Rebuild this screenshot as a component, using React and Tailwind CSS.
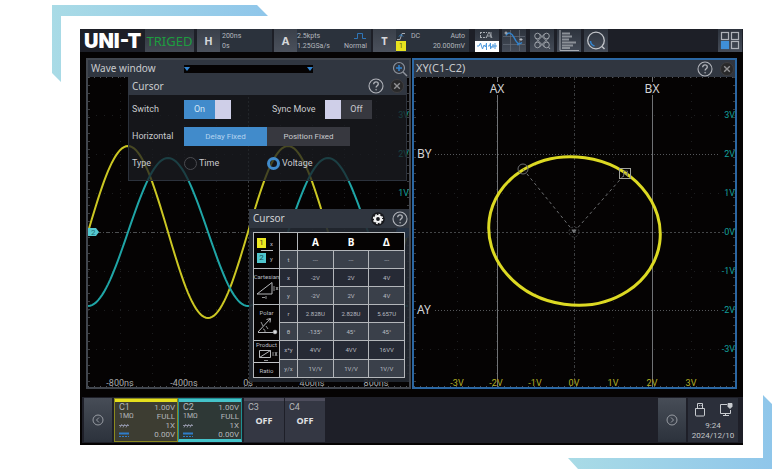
import { useState } from 'react'

const CHANNELS = [
  { name: 'C1', scale: '1.00V', box: 'border-[#8c8a1e] bg-[#3d3d32]', bar: 'bg-[#e6e01e]', foot: '' },
  { name: 'C2', scale: '1.00V', box: 'border-[#1f8f92] bg-[#2e3836]', bar: 'bg-[#45c3ca]', foot: 'border-b-[3px] border-b-[#45c3ca]' },
]

const ROWS = [
  { key: 't', values: ['---', '---', '---'] },
  { key: 'x', head: 'cartesian', values: ['-2V', '2V', '4V'] },
  { key: 'y', values: ['-2V', '2V', '4V'] },
  { key: 'r', head: 'polar', values: ['2.828U', '2.828U', '5.657U'] },
  { key: 'θ', values: ['-135°', '45°', '45°'] },
  { key: 'x*y', head: 'product', values: ['4VV', '4VV', '16VV'] },
  { key: 'y/x', values: ['1V/V', '1V/V', '1V/V'] },
]

function sine(amp, phase) {
  let d = ''
  for (let x = 0; x <= 320; x += 2) {
    const y = 155 - amp * Math.sin((x / 160) * Math.PI * 2 + phase)
    d += `${x === 0 ? 'M' : 'L'}${x} ${y.toFixed(2)}`
  }
  return d
}

function HelpIcon() {
  return (
    <svg viewBox="0 0 16 16" className="size-4" fill="none" stroke="#b0b3b9">
      <circle cx="8" cy="8" r="7" strokeWidth="1.1" />
      <path d="M5.7 6.3c0-1.5 1-2.4 2.3-2.4s2.3.9 2.3 2.1c0 1.7-2.2 1.8-2.2 3.5" strokeWidth="1.3" />
      <circle cx="8.1" cy="11.7" r=".5" fill="#b0b3b9" strokeWidth=".5" />
    </svg>
  )
}

function CloseIcon() {
  return (
    <svg viewBox="0 0 14 14" className="size-3.5">
      <circle cx="7" cy="7" r="6.5" fill="#29292a" stroke="#3e3e40" />
      <path d="M4.2 4.2l5.6 5.6M9.800 4.200l-5.600 5.600" stroke="#929294" strokeWidth="1.4" />
    </svg>
  )
}

function GearIcon() {
  return (
    <svg viewBox="0 0 14 14" className="size-3.5">
      <circle cx="7" cy="7" r="6.8" fill="#17181c" />
      <circle cx="7" cy="7" r="3" fill="none" stroke="#f2f2f2" strokeWidth="2.2" />
      <circle cx="7" cy="7" r="4.5" fill="none" stroke="#f2f2f2" strokeWidth="1.4" strokeDasharray="1.8 1.73" />
    </svg>
  )
}

function IconButton({ label, className = '', children }) {
  return (
    <button aria-label={label} className={`flex shrink-0 items-center justify-center ${className}`}>
      {children}
    </button>
  )
}

function Knob({ children }) {
  return (
    <button className="w-[23px] shrink-0 bg-linear-to-b from-[#3a404a] to-[#4b515c] font-['Noto_Sans',sans-serif] text-[11px] font-bold text-[#d5d7da]">
      {children}
    </button>
  )
}

function TopBar() {
  const tool = 'h-[23px] w-6 bg-linear-to-b from-[#2d333d] to-[#454c58]'
  return (
    <header className="flex h-[23px] overflow-hidden bg-[#1d1f27] text-[7px] leading-[10px] text-[#b3b7bd]">
      <div className="flex w-[65px] shrink-0 items-center pl-1 font-['Inter',sans-serif] text-[20px] font-black text-white">UNI-T</div>
      <div className="flex w-[49px] shrink-0 items-center justify-center bg-linear-to-b from-[#2f353e] to-[#434953] font-['Noto_Sans',sans-serif] text-[13px] text-[#1d9c3f]">TRIGED</div>
      <div className="ml-[3px] flex shrink-0">
        <Knob>H</Knob>
        <div className="w-[52px] bg-[#2b323c] pt-0.5 pl-0.5">
          <p>200ns</p>
          <p>0s</p>
        </div>
      </div>
      <div className="ml-0.5 flex shrink-0">
        <Knob>A</Knob>
        <div className="flex w-[74px] justify-between bg-[#2b323c] pt-0.5 pr-1">
          <div>
            <p>2.5kpts</p>
            <p>1.25GSa/s</p>
          </div>
          <div className="flex flex-col items-end">
            <svg viewBox="0 0 13 10" className="h-2.5 w-[13px]" fill="none" stroke="#2f76b8">
              <path d="M0 7.5h3.5V2.5h5v5H12" />
            </svg>
            <p>Normal</p>
          </div>
        </div>
      </div>
      <div className="ml-0.5 flex shrink-0">
        <Knob>T</Knob>
        <div className="flex w-[73px] bg-[#2b323c] pt-0.5 pr-1">
          <div className="w-[15px]">
            <svg viewBox="0 0 10 10" className="size-2.5" fill="none">
              <path d="M1 8.5h3l2-6h3" stroke="#b3b7bd" strokeWidth=".9" />
              <path d="M3 5.5l2-2 2 2" stroke="#2f86d0" />
            </svg>
            <p className="w-2.5 bg-[#e8e31f] text-center text-[#5b5a18]">1</p>
          </div>
          <p>DC</p>
          <div className="ml-auto text-right">
            <p>Auto</p>
            <p>20.000mV</p>
          </div>
        </div>
      </div>
      <div className="ml-1.5 flex shrink-0 gap-[3px]">
        <IconButton label="Zone select" className={tool}>
          <svg viewBox="0 0 24 23" className="h-[23px] w-6" fill="none">
            <path d="M5 3.5h7M5 8.5h7M5.5 3v6" stroke="#a7abb2" strokeDasharray="2 1" />
            <path d="M11 9l3-6 3 6M12 7h4M16 3v6" stroke="#a7abb2" strokeWidth=".9" />
            <path d="M0 12h24v11H0z" fill="#fff" />
            <path d="M2 17h2l1.500-3 2 6 1.500-4 1.500 2 1-4v7M13 17h1.500l1-3v6l1.500-3M18 15v4M20 14v6M22 17h-5" stroke="#4b98dd" />
          </svg>
        </IconButton>
        <IconButton label="Cursor" className={tool}>
          <svg viewBox="0 0 24 23" className="h-[23px] w-6" fill="none">
            <path d="M8.500 1v21M17.500 1v21M1 7.500h22M1 15.500h22" stroke="#666d78" strokeWidth=".7" />
            <path d="M4 6.500C6 2.500 9.500 3.500 12 8.500s4.500 8 8 5" stroke="#3284cf" strokeWidth="1.500" />
            <path d="M2.500 4h3M4 2.500v3M17.500 10.500h3M19 9v3" stroke="#b9bcc2" />
            <circle cx="16" cy="15.500" r="1" fill="#3284cf" />
          </svg>
        </IconButton>
      </div>
      <div className="ml-1 flex shrink-0 gap-[3px]">
        <IconButton label="Math" className={tool}>
          <svg viewBox="0 0 24 23" className="h-[23px] w-6" fill="none" stroke="#a3a7ae" strokeWidth=".9">
            <circle cx="7.500" cy="7" r="2.800" />
            <circle cx="16.500" cy="7" r="2.800" />
            <circle cx="7.500" cy="16" r="2.800" />
            <circle cx="16.500" cy="16" r="2.800" />
            <path d="M9.500 5l9 9M14.500 5l-9 9M9.500 18l9-9M14.500 18l-9-9M18.500 18l1.500 2" />
          </svg>
        </IconButton>
        <IconButton label="Histogram" className={tool}>
          <svg viewBox="0 0 24 23" className="h-[23px] w-6" fill="none">
            <path d="M3 1v20.500h19" stroke="#a7abb2" />
            <path d="M5 4.500h8M5 7.500h10M5 10.500h7M5 13.500h14M5 16.500h11M5 19h8" stroke="#8b9097" strokeWidth="2" />
          </svg>
        </IconButton>
        <IconButton label="Search" className={tool}>
          <svg viewBox="0 0 24 23" className="h-[23px] w-6" fill="none">
            <circle cx="12" cy="11.500" r="8.300" stroke="#c2c5ca" strokeWidth="1.300" />
            <path d="M18 17.500l2.500 2.500" stroke="#c2c5ca" strokeWidth="1.400" />
            <path d="M6.500 12a5.500 5.500 0 0 0 4 5" stroke="#3284cf" strokeWidth="1.500" />
          </svg>
        </IconButton>
      </div>
      <IconButton label="Layout" className={`ml-auto mr-px ${tool}`}>
        <svg viewBox="0 0 24 23" className="h-[23px] w-6" fill="none" stroke="#aeb2b9" strokeWidth="1.200">
          <rect x="3.500" y="3.500" width="7" height="7" />
          <rect x="13.500" y="3.500" width="7" height="7" />
          <rect x="3.500" y="12.500" width="7" height="7" fill="#3f8fd8" stroke="#3f8fd8" />
          <rect x="13.500" y="12.500" width="7" height="7" />
        </svg>
      </IconButton>
    </header>
  )
}

function WavePlot() {
  return (
    <svg viewBox="0 0 321 310" className="block h-auto w-full font-['Roboto',sans-serif] text-[9px]" fill="none">
      <g stroke="#1d1e20" strokeDasharray="1 7">
        {[32, 64, 96, 128, 192, 224, 256, 288].map((x) => (
          <path key={x} d={`M${x}.5 0V310`} />
        ))}
        {[38, 77, 116, 194, 233, 272].map((y) => (
          <path key={y} d={`M0 ${y}.500H321`} />
        ))}
      </g>
      <path d="M160.500 0V310" stroke="#3a3c3e" strokeDasharray="2 2" />
      <path d="M0 155.500H321" stroke="#4c4e50" strokeDasharray="4 2 1 2" />
      <path d="M1 0V310M320 0V310" stroke="#3c3e42" strokeDasharray="1 7" strokeWidth="2" />
      <path d="M0 .5H321M0 309.500H321" stroke="#505256" strokeDasharray="1 5" />
      <path d={sine(86, 0)} stroke="#cbc723" strokeWidth="2" />
      <path d={sine(74, -Math.PI / 2)} stroke="#1fa5a6" strokeWidth="2" />
      <circle cx="315" cy="155" r="7" fill="#2f7fd0" />
      <path d="M0 151h8l3 4-3 4H0z" fill="#55c8cf" />
      <text x="3" y="158" fill="#1d6f76" className="text-[8px]">2</text>
      <g fill="#13a09c" textAnchor="end">
        <text x="321" y="41">3V</text>
        <text x="321" y="80">2V</text>
        <text x="321" y="119">1V</text>
      </g>
      <g fill="#a9abae" textAnchor="middle">
        <text x="32" y="309">-800ns</text>
        <text x="96" y="309">-400ns</text>
        <text x="160" y="309">0s</text>
        <text x="224" y="309">400ns</text>
        <text x="288" y="309">800ns</text>
      </g>
    </svg>
  )
}

function XYPlot() {
  return (
    <svg viewBox="0 0 321 310" className="block h-auto w-full font-['Roboto',sans-serif] text-[9px]" fill="none">
      <g stroke="#1d1e20" strokeDasharray="1 7">
        {[43, 82, 121, 199, 238, 277].map((x) => (
          <path key={x} d={`M${x}.500 0V310`} />
        ))}
        {[38, 116, 194, 272].map((y) => (
          <path key={y} d={`M0 ${y}.500H321`} />
        ))}
      </g>
      <path d="M160.500 0V310" stroke="#3c3e40" strokeDasharray="3 2 1 2" />
      <path d="M0 155.500H310" stroke="#434547" strokeDasharray="2 2" />
      <path d="M21 77.500H306M21 233.500H306" stroke="#55575a" strokeDasharray="1 2" />
      <path d="M1 0V310M320 0V310" stroke="#3c3e42" strokeDasharray="1 7" strokeWidth="2" />
      <path d="M0 .5H321M0 309.500H321" stroke="#505256" strokeDasharray="1 5" />
      <path d="M83.500 0V5M83.500 18V310M238.500 0V5M238.500 18V310" stroke="#707275" />
      <ellipse cx="160.500" cy="154" rx="86" ry="74" transform="rotate(8 160.500 154)" stroke="#dcd923" strokeWidth="3" />
      <g stroke="#6c6e70">
        <path d="M160 155L109 92M160 155L211 97" strokeDasharray="3 3" />
        <circle cx="160" cy="155" r="5" strokeDasharray="2 2" stroke="#3e4042" />
        <circle cx="109" cy="92" r="5" />
        <rect x="205.500" y="91.500" width="11" height="10" stroke="#a0a29a" />
        <path d="M209.500 94h4M209.500 97h4M209.500 94v6M213.500 94v6" strokeWidth=".8" />
        <path d="M158 153l2 3 2-3z" fill="#7c7e80" />
      </g>
      <g fill="#d2d3d5" className="font-['Noto_Sans',sans-serif] text-[12px]">
        <text x="83" y="16" textAnchor="middle">AX</text>
        <text x="238" y="16" textAnchor="middle">BX</text>
        <text x="3" y="81">BY</text>
        <text x="3" y="237">AY</text>
      </g>
      <g fill="#13a09c" textAnchor="end">
        {[3, 2, 1, 0, -1, -2, -3].map((v, i) => (
          <text key={v} x="321" y={41 + i * 39}>{v}V</text>
        ))}
      </g>
      <g fill="#b3b027" textAnchor="middle">
        {[-3, -2, -1, 0, 1, 2, 3].map((v, i) => (
          <text key={v} x={43 + i * 39} y="309">{v}V</text>
        ))}
      </g>
    </svg>
  )
}

function Switch({ label, on, onChange }) {
  return (
    <button
      role="switch"
      aria-label={label}
      aria-checked={on}
      onClick={() => onChange(!on)}
      className={`flex h-[19px] w-[47px] shrink-0 items-stretch text-[9px] ${on ? 'bg-[#418bcb] text-[#d3e4f4]' : 'flex-row-reverse bg-[#37383f] text-[#c9cacd]'}`}
    >
      <span className="flex flex-1 items-center justify-center">{on ? 'On' : 'Off'}</span>
      <span className="w-4 bg-[#cfcfe8]" />
    </button>
  )
}

function CursorDialog() {
  const [on, setOn] = useState(true)
  const [sync, setSync] = useState(false)
  const [mode, setMode] = useState('Delay Fixed')
  const [type, setType] = useState('Voltage')
  return (
    <section className="absolute top-0 right-0.5 left-10 text-[9px] text-[#c9cbce]">
      <div className="flex h-[18px] items-center gap-1.5 bg-[#303640] pr-[3px] pl-1">
        <h3 className="mr-auto font-['Noto_Sans',sans-serif] text-[10px]">Cursor</h3>
        <IconButton label="Help"><HelpIcon /></IconButton>
        <IconButton label="Close"><CloseIcon /></IconButton>
      </div>
      <div className="flex flex-col gap-2 border border-t-0 border-[#2c323c] bg-[#1b1d23]/75 pt-[5px] pr-1 pb-[7px] pl-[3px]">
        <div className="flex h-[19px] items-center">
          <span className="w-[52px] shrink-0">Switch</span>
          <Switch label="Switch" on={on} onChange={setOn} />
          <span className="ml-[41px] w-[53px] shrink-0">Sync Move</span>
          <Switch label="Sync Move" on={sync} onChange={setSync} />
        </div>
        <div className="flex h-[19px] items-center">
          <span className="w-[52px] shrink-0">Horizontal</span>
          {['Delay Fixed', 'Position Fixed'].map((m) => (
            <button
              key={m}
              onClick={() => setMode(m)}
              className={`h-[19px] w-[83px] text-[8px] ${mode === m ? 'bg-[#418bcb] text-[#b5d3ef]' : 'bg-[#37383f] text-[#c9cacd]'}`}
            >
              {m}
            </button>
          ))}
        </div>
        <div className="flex h-[19px] items-center">
          <span className="w-[52px] shrink-0">Type</span>
          {['Time', 'Voltage'].map((t) => (
            <label key={t} className="flex w-[83px] items-center gap-0.5">
              <input
                type="radio"
                name="type"
                checked={type === t}
                onChange={() => setType(t)}
                className="size-[13px] appearance-none rounded-full border border-[#4a4b50] checked:border-[3px] checked:border-[#418bcb]"
              />
              {t}
            </label>
          ))}
        </div>
      </div>
    </section>
  )
}

function RowHead({ kind }) {
  if (kind === 'cartesian') {
    return (
      <div className="flex flex-col items-center">
        Cartesian
        <svg viewBox="0 0 24 20" className="h-5 w-6" fill="none" stroke="#b5b7ba">
          <path d="M2 14L17 2.500V14z" />
          <path d="M19 6v5M21 7l2 3M23 7l-2 3M7 17.500h3M11 16v3" strokeWidth=".8" />
        </svg>
      </div>
    )
  }
  if (kind === 'polar') {
    return (
      <div className="flex flex-col items-center">
        Polar
        <svg viewBox="0 0 24 20" className="h-5 w-6" fill="none" stroke="#b5b7ba">
          <path d="M3 16L15 3M11.500 3.500L15.500 2.500 15 6.500M3 16.500h15" />
          <path d="M6 6l2 4M8 13c2 0 2 2 2 3M11 10l2 3" strokeWidth=".8" />
          <circle cx="20" cy="16" r="1.800" fill="#d8d9db" />
        </svg>
      </div>
    )
  }
  return (
    <div className="flex h-9 flex-col">
      <div className="flex h-[22px] flex-col items-center border-b border-[#c2c4c7]">
        Product
        <svg viewBox="0 0 24 14" className="h-3.5 w-6" fill="none" stroke="#b5b7ba">
          <path d="M4.500 2.500h11v7h-11zM4.500 9.500l11-7" />
          <path d="M18 4v4M20 4l2 4M22 4l-2 4M9 12.500h4" strokeWidth=".8" />
        </svg>
      </div>
      <p className="flex flex-1 items-center justify-center">Ratio</p>
    </div>
  )
}

function CursorTable() {
  const line = 'border border-[#b3b6ba] p-0 text-center align-middle font-normal'
  return (
    <section className="absolute top-[132px] right-0 left-[161px] bg-[#242932]/90 pb-1">
      <div className="flex h-[19px] items-center gap-[7px] bg-[#303640] pr-px pl-1">
        <h3 className="mr-auto font-['Noto_Sans',sans-serif] text-[10px] text-[#d0d2d5]">Cursor</h3>
        <IconButton label="Settings"><GearIcon /></IconButton>
        <IconButton label="Help"><HelpIcon /></IconButton>
      </div>
      <div className="px-1 pt-1">
        <table className="w-full table-fixed border-collapse text-[6px] leading-[7px] text-[#b9bcc1]">
          <thead>
            <tr className="h-[18px] bg-[#050303] font-['Noto_Sans',sans-serif] text-[10px] text-white">
              <th rowSpan={2} className={`w-[26px] bg-[#050303] ${line}`}>
                <div className="mx-[3px] flex flex-col items-start gap-0.5 font-['Roboto',sans-serif] text-[6px] text-[#b9bcc1]">
                  <p className="flex items-center gap-1"><span className="w-[9px] bg-[#ece822] text-[8px] leading-[10px] text-[#4c4a10]">1</span>x</p>
                  <span className="ml-1 h-px w-3 bg-[#b9bcc1]" />
                  <p className="flex items-center gap-1"><span className="w-[9px] bg-[#50c6cd] text-[8px] leading-[10px] text-[#134b50]">2</span>y</p>
                </div>
              </th>
              <th className={`w-[18px] ${line}`} />
              {['A', 'B', 'Δ'].map((h) => (
                <th key={h} className="border-y border-[#b3b6ba] p-0 leading-4 font-bold last:border-r">{h}</th>
              ))}
            </tr>
            <tr className="h-[18px] bg-[#3a404a]">
              <th className={line}>{ROWS[0].key}</th>
              {ROWS[0].values.map((v, i) => <td key={i} className={line}>{v}</td>)}
            </tr>
          </thead>
          <tbody>
            {ROWS.slice(1).map((r) => (
              <tr key={r.key} className={`h-[18px] ${r.head ? 'bg-[#262a35]' : 'bg-[#3a404a]'}`}>
                {r.head && (
                  <th rowSpan={2} className={`overflow-hidden bg-[#050303] ${line}`}>
                    <RowHead kind={r.head} />
                  </th>
                )}
                <th className={line}>{r.key}</th>
                {r.values.map((v, i) => <td key={i} className={line}>{v}</td>)}
              </tr>
            ))}
          </tbody>
        </table>
      </div>
    </section>
  )
}

function BottomBar() {
  const arrow = 'w-7 bg-linear-to-b from-[#474d57] to-[#2c323c]'
  return (
    <footer className="mt-2 ml-0.5 flex h-[46px] gap-0.5 bg-[#1e1f28] py-[1px] pr-[5px] pl-0.5 text-[8px] leading-[9px] text-[#b4b7ba]">
      <IconButton label="Previous" className={arrow}>
        <svg viewBox="0 0 12 12" className="size-3" fill="none" stroke="#989ca3">
          <circle cx="6" cy="6" r="5" />
          <path d="M7 3.500L4.500 6 7 8.500" />
        </svg>
      </IconButton>
      <div className="flex">
        {CHANNELS.map((c) => (
          <section key={c.name} className={`w-16 border ${c.box} ${c.foot}`}>
            <div className={`h-[3px] ${c.bar}`} />
            <div className="grid grid-cols-[1fr_auto] pt-px pr-0.5 pl-1">
              <h4 className="text-[9px]">{c.name}</h4>
              <span className="text-right">{c.scale}</span>
              <span className="text-[7px]">1MΩ</span>
              <span className="text-right">FULL</span>
              <svg viewBox="0 0 10 9" className="h-[9px] w-2.5" fill="none" stroke="#8b8fa0">
                <path d="M0 4.500h10M1 6.500L3 3M4 6.500L6 3M7 6.500L9 3" />
              </svg>
              <span className="text-right">1X</span>
              <svg viewBox="0 0 10 9" className="h-[9px] w-2.5" fill="none" stroke="#2f7cc8">
                <path d="M0 3.500h10" strokeWidth="2" />
                <path d="M0 6.500h10" strokeDasharray="2 1" />
              </svg>
              <span className="text-right">0.00V</span>
            </div>
          </section>
        ))}
      </div>
      <div className="flex gap-px">
        {['C3', 'C4'].map((c) => (
          <section key={c} className="w-10 border-t-[3px] border-[#4d4d5c] bg-[#343743] pt-0.5">
            <h4 className="pl-1 text-[9px]">{c}</h4>
            <p className="pt-1 text-center font-['Noto_Sans',sans-serif] text-[9px] font-bold text-[#e0e1e3]">OFF</p>
          </section>
        ))}
      </div>
      <IconButton label="Next" className={`ml-auto ${arrow}`}>
        <svg viewBox="0 0 12 12" className="size-3" fill="none" stroke="#989ca3">
          <circle cx="6" cy="6" r="5" />
          <path d="M5 3.500L7.500 6 5 8.500" />
        </svg>
      </IconButton>
      <div className="flex w-[50px] flex-col items-center bg-[#2b2f3a] pt-1 text-[#c3c5c9]">
        <div className="mb-1 flex gap-3">
          <svg viewBox="0 0 14 15" className="h-[15px] w-3.5" fill="none" stroke="#c9ccd0">
            <path d="M4.500 6V1.500h5V6M2.500 6.500h9v6.500q0 1-1 1h-7q-1 0-1-1z" />
            <path d="M6 3.500h.8M7.800 3.500h.8" />
          </svg>
          <svg viewBox="0 0 14 15" className="h-[15px] w-3.5" fill="none" stroke="#c9ccd0">
            <path d="M8 2.500H1.500v9h10V8M4 13.500h6M6.500 11.500v2" />
            <path d="M9 1.500h4v3l-2 2-2-2z" fill="#c9ccd0" />
          </svg>
        </div>
        <p>9:24</p>
        <p className="pt-px">2024/12/10</p>
      </div>
    </footer>
  )
}

export default function App() {
  return (
    <div className="relative min-h-screen bg-white pt-[29px] pr-[35px] pb-7 pl-20 font-['Roboto','Noto_Sans',sans-serif]">
      <svg viewBox="0 0 216 77" className="absolute top-[5px] left-[52px] h-[77px] w-[216px]">
        <defs>
          <linearGradient id="edge">
            <stop offset="0" stopColor="#a9dbe6" />
            <stop offset="1" stopColor="#8fc6ea" />
          </linearGradient>
        </defs>
        <path d="M0 0H205L216 11H9V77L0 68z" fill="url(#edge)" />
      </svg>
      <svg viewBox="0 0 204 74" className="absolute right-1.5 bottom-1 h-[74px] w-[204px]">
        <path d="M0 63H195V0L204 9V74H10z" fill="url(#edge)" />
      </svg>

      <div className="bg-[#050303] pb-0.5">
        <TopBar />
        <main className="grid grid-cols-2 gap-px px-1.5 pt-1.5">
          <section className="border-2 border-[#41464e]">
            <div className="flex h-[17px] items-center bg-[#303640]">
              <h2 className="w-24 shrink-0 pl-[3px] font-['Noto_Sans',sans-serif] text-[10px] text-[#c9cbce]">Wave window</h2>
              <div className="flex h-2 w-[129px] justify-between bg-[#050303]">
                <svg viewBox="0 0 6 4" className="mt-0.5 h-1 w-1.5"><path d="M0 0h6L3 4z" fill="#3284cf" /></svg>
                <svg viewBox="0 0 6 4" className="mt-0.5 h-1 w-1.5"><path d="M0 0h6L3 4z" fill="#3284cf" /></svg>
              </div>
              <IconButton label="Zoom in" className="mr-px ml-auto">
                <svg viewBox="0 0 16 16" className="size-4" fill="none">
                  <circle cx="7" cy="7" r="5.500" stroke="#8f949c" strokeWidth="1.200" />
                  <path d="M11 11l4 4" stroke="#8f949c" strokeWidth="1.400" />
                  <path d="M4 7h6M7 4v6" stroke="#3284cf" strokeWidth="1.500" />
                </svg>
              </IconButton>
            </div>
            <div className="relative">
              <WavePlot />
              <CursorDialog />
              <CursorTable />
            </div>
          </section>
          <section className="border-2 border-[#2b67a3]">
            <div className="flex h-[17px] items-center gap-[7px] bg-[#303640] pr-px pl-0.5">
              <h2 className="mr-auto font-['Noto_Sans',sans-serif] text-[11px] text-[#c9cbce]">XY(C1-C2)</h2>
              <IconButton label="Help"><HelpIcon /></IconButton>
              <IconButton label="Close"><CloseIcon /></IconButton>
            </div>
            <XYPlot />
          </section>
        </main>
        <BottomBar />
      </div>
    </div>
  )
}
